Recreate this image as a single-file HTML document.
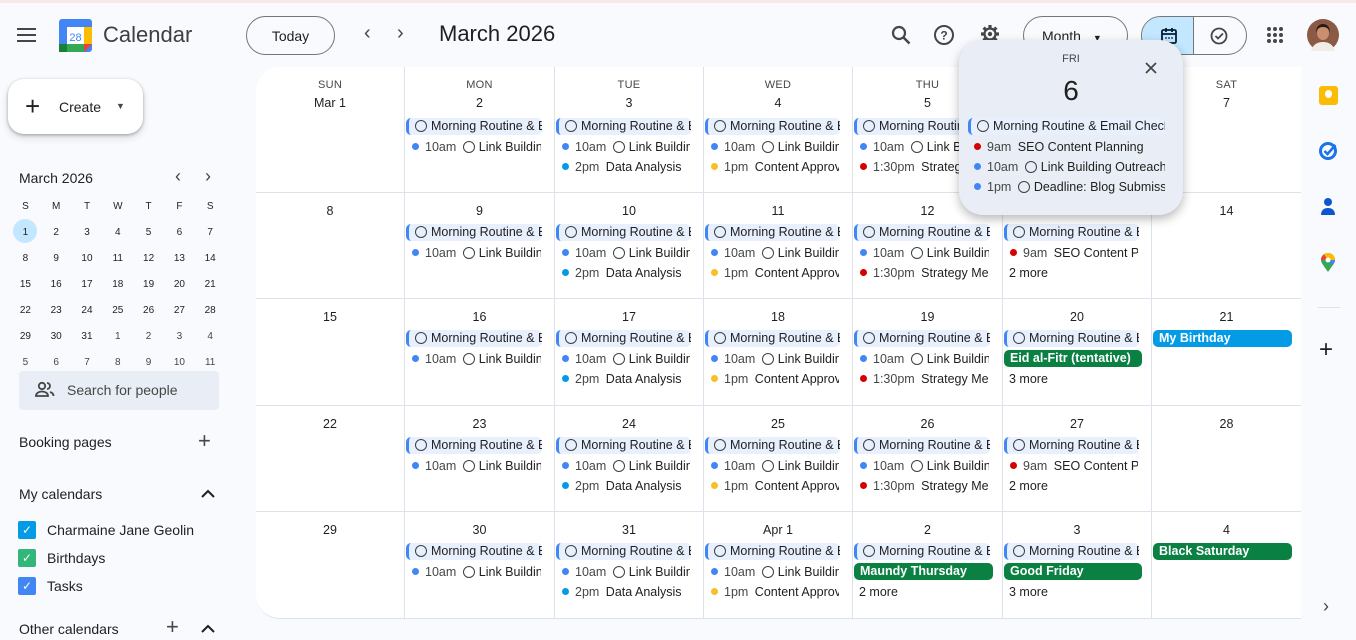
<!DOCTYPE html>
<html><head><meta charset="utf-8">
<style>
*{box-sizing:border-box;margin:0;padding:0}
body{width:1356px;height:633px;overflow:hidden;background:#f8fafd;font-family:"Liberation Sans",Arial,sans-serif;color:#1f1f1f;position:relative}
.a{position:absolute}
.topline{left:0;top:0;width:1356px;height:3px;background:#fbe9e7}
.grid{position:absolute;left:256px;top:67px;width:1045px;height:552px;background:#fff;border-radius:24px 0 0 24px;display:grid;grid-template-columns:149px 150px 149px 149px 150px 149px 149px;grid-template-rows:126px 106px 107px 106px 107px;overflow:hidden;border-bottom:1px solid #dde3ea}
.c{border-right:1px solid #dde3ea;border-bottom:1px solid #dde3ea;padding-top:9px;overflow:hidden;font-size:12px}
.c:nth-child(7n){border-right:none}
.dn{text-align:center;font-size:11px;color:#444746;height:18px;line-height:18px;letter-spacing:.3px}
.n{text-align:center;font-size:12.5px;height:18px;line-height:18px;color:#1f1f1f}
.ev{margin-top:4px}
.r1 .ev{margin-top:6px}
.ch{height:17px;margin:0 12px 3px 1px;background:#e8f0fe;border-left:3px solid #4285f4;border-radius:5px;white-space:nowrap;overflow:hidden;line-height:17px;padding-left:6px;font-size:12.5px}
.ch i,.l i.o{display:inline-block;width:12px;height:12px;border:1.6px solid #3c4043;border-radius:50%;vertical-align:-2px;margin-right:4px}
.l{height:20px;line-height:19px;white-space:nowrap;overflow:hidden;padding-left:7px;margin-right:13px;font-size:12.5px}
.l b{display:inline-block;width:7px;height:7px;border-radius:50%;background:#4285f4;margin-right:6px;vertical-align:1px}
.l span.t{color:#444746;margin-right:3px}
.g{height:17px;margin:0 9px 3px 1px;background:#0b8043;color:#fff;font-weight:bold;border-radius:5px;padding-left:6px;line-height:17px;white-space:nowrap;overflow:hidden;font-size:12.5px}
.more{padding-left:6px;height:20px;line-height:19px;font-size:12.5px}
.btn{border:1px solid #747775;border-radius:20px;font-size:14px;text-align:center;line-height:38px}
.pop{left:959px;top:40px;width:224px;height:175px;background:#e9eef6;border-radius:24px;box-shadow:0 4px 10px rgba(0,0,0,.28)}
</style></head><body>
<div class="a topline"></div>
<svg class="a" style="left:17px;top:26px" width="20" height="18"><g fill="#444746"><rect y="2" width="19" height="2"/><rect y="8" width="19" height="2"/><rect y="14" width="19" height="2"/></g></svg>
<svg class="a" style="left:59px;top:19px" width="33" height="33" viewBox="0 0 33 33"><rect x="0" y="0" width="33" height="33" rx="3" fill="#4285f4"/><rect x="25" y="8" width="8" height="17" fill="#fbbc04"/><rect x="0" y="25" width="25" height="8" rx="2" fill="#34a853"/><rect x="0" y="25" width="8" height="8" fill="#188038"/><path d="M25 25h8l-8 8z" fill="#ea4335"/><rect x="8" y="8" width="17" height="17" fill="#fff"/><text x="16.5" y="22" font-size="11" text-anchor="middle" fill="#4285f4" font-family="Liberation Sans">28</text></svg>
<div class="a" style="left:103px;top:22px;font-size:22px;color:#3c4043">Calendar</div>
<div class="a btn" style="left:246px;top:16px;width:89px;height:39px">Today</div>
<div class="a" style="left:364px;top:22px;font-size:20px;color:#444746">&#8249;</div>
<div class="a" style="left:397px;top:22px;font-size:20px;color:#444746">&#8250;</div>
<div class="a" style="left:439px;top:21px;font-size:22px">March 2026</div>
<svg class="a" style="left:891px;top:25px" width="20" height="20" viewBox="0 0 20 20"><circle cx="8" cy="8" r="6" fill="none" stroke="#444746" stroke-width="2.2"/><path d="M12.5 12.5l6 6" stroke="#444746" stroke-width="2.5"/></svg>
<svg class="a" style="left:933px;top:24px" width="22" height="22" viewBox="0 0 22 22"><circle cx="11" cy="11" r="9" fill="none" stroke="#444746" stroke-width="2"/><text x="11" y="15.5" font-size="12" text-anchor="middle" fill="#444746" font-weight="bold" font-family="Liberation Sans">?</text></svg>
<svg class="a" style="left:979px;top:23px" width="22" height="22" viewBox="0 0 22 22"><g stroke="#444746" stroke-width="3.2"><path d="M11 2v4M11 16v4M2 11h4M16 11h4M4.6 4.6l2.8 2.8M14.6 14.6l2.8 2.8M4.6 17.4l2.8-2.8M14.6 7.4l2.8-2.8"/></g><circle cx="11" cy="11" r="5.5" fill="none" stroke="#444746" stroke-width="2.2"/><circle cx="11" cy="11" r="2.2" fill="#444746"/></svg>
<div class="a btn" style="left:1023px;top:16px;width:105px;height:39px;text-align:left;padding-left:18px">Month <span style="font-size:9px;margin-left:8px">&#9660;</span></div>
<div class="a" style="left:1141px;top:16px;width:106px;height:39px;border:1px solid #747775;border-radius:20px;overflow:hidden"><div style="position:absolute;left:0;top:0;width:52px;height:39px;background:#c2e7ff;border-right:1px solid #747775"></div>
<svg style="position:absolute;left:18px;top:10px" width="18" height="18" viewBox="0 0 18 18"><rect x="2" y="3" width="14" height="13" rx="1.5" fill="none" stroke="#001d35" stroke-width="1.8"/><path d="M2 7h14M6 1v4M12 1v4" stroke="#001d35" stroke-width="1.8"/><circle cx="6" cy="11" r=".9" fill="#001d35"/><circle cx="9" cy="11" r=".9" fill="#001d35"/><circle cx="12" cy="11" r=".9" fill="#001d35"/></svg>
<svg style="position:absolute;left:67px;top:9px" width="20" height="20" viewBox="0 0 20 20"><circle cx="10" cy="10" r="7.5" fill="none" stroke="#444746" stroke-width="1.8"/><path d="M6.5 10l2.5 2.5 5-5" fill="none" stroke="#444746" stroke-width="1.8"/></svg></div>
<svg class="a" style="left:1266px;top:26px" width="18" height="18"><g fill="#444746"><circle cx="3" cy="3" r="2"/><circle cx="9" cy="3" r="2"/><circle cx="15" cy="3" r="2"/><circle cx="3" cy="9" r="2"/><circle cx="9" cy="9" r="2"/><circle cx="15" cy="9" r="2"/><circle cx="3" cy="15" r="2"/><circle cx="9" cy="15" r="2"/><circle cx="15" cy="15" r="2"/></g></svg>
<svg class="a" style="left:1307px;top:19px" width="32" height="32"><circle cx="16" cy="16" r="16" fill="#8a5a44"/><ellipse cx="16" cy="14" rx="6" ry="7" fill="#c98f6e"/><path d="M4 32c2-7 7-9 12-9s10 2 12 9z" fill="#f1ece6"/><path d="M9 14c0-7 4-9 7-9s7 2 7 9c-1-4-3-6-7-6s-6 2-7 6z" fill="#2b1a12"/></svg>
<div class="a" style="left:8px;top:79px;width:135px;height:55px;background:#fff;border-radius:16px;box-shadow:0 1px 3px rgba(0,0,0,.3),0 4px 8px rgba(0,0,0,.12)"></div>
<div class="a" style="left:25px;top:93px;font-size:26px;line-height:26px;font-weight:300">+</div>
<div class="a" style="left:59px;top:99px;font-size:14px">Create</div>
<div class="a" style="left:116px;top:101px;font-size:9px;color:#444746">&#9660;</div>
<div class="a" style="left:19px;top:170px;font-size:14px">March 2026</div>
<div class="a" style="left:175px;top:166px;font-size:18px;color:#444746">&#8249;</div>
<div class="a" style="left:205px;top:166px;font-size:18px;color:#444746">&#8250;</div>
<div class="a" style="left:13px;top:219px;width:24px;height:24px;border-radius:50%;background:#c2e7ff"></div>
<div class="a" style="left:10px;top:201px;display:grid;grid-template-columns:repeat(7,30.8px);grid-auto-rows:26px;font-size:10px;text-align:center;line-height:12px;color:#1f1f1f">
<div>S</div><div>M</div><div>T</div><div>W</div><div>T</div><div>F</div><div>S</div>
<div>1</div><div>2</div><div>3</div><div>4</div><div>5</div><div>6</div><div>7</div>
<div>8</div><div>9</div><div>10</div><div>11</div><div>12</div><div>13</div><div>14</div>
<div>15</div><div>16</div><div>17</div><div>18</div><div>19</div><div>20</div><div>21</div>
<div>22</div><div>23</div><div>24</div><div>25</div><div>26</div><div>27</div><div>28</div>
<div>29</div><div>30</div><div>31</div><div style="color:#444746">1</div><div style="color:#444746">2</div><div style="color:#444746">3</div><div style="color:#444746">4</div>
<div style="color:#444746">5</div><div style="color:#444746">6</div><div style="color:#444746">7</div><div style="color:#444746">8</div><div style="color:#444746">9</div><div style="color:#444746">10</div><div style="color:#444746">11</div>
</div>
<div class="a" style="left:19px;top:371px;width:200px;height:39px;background:#e9eef6;border-radius:4px"></div>
<svg class="a" style="left:35px;top:381px" width="20" height="18" viewBox="0 0 20 18"><circle cx="7" cy="5" r="3.2" fill="none" stroke="#444746" stroke-width="1.8"/><path d="M1 15c0-3 3-4.5 6-4.5s6 1.5 6 4.5z" fill="none" stroke="#444746" stroke-width="1.8"/><path d="M12 2a3 3 0 010 6M15 11c2 .6 3.5 2 3.5 4" fill="none" stroke="#444746" stroke-width="1.8"/></svg>
<div class="a" style="left:67px;top:382px;font-size:14px;color:#444746">Search for people</div>
<div class="a" style="left:19px;top:434px;font-size:14px">Booking pages</div>
<div class="a" style="left:198px;top:428px;font-size:22px;color:#444746;font-weight:300">+</div>
<div class="a" style="left:19px;top:486px;font-size:14px">My calendars</div>
<svg class="a" style="left:201px;top:489px" width="14" height="10"><path d="M1 8l6-6 6 6" fill="none" stroke="#1f1f1f" stroke-width="2"/></svg>
<div class="a" style="left:18px;top:521px;width:18px;height:18px;background:#039be5;border-radius:2px;color:#fff;font-size:12px;text-align:center;line-height:18px">&#10003;</div>
<div class="a" style="left:47px;top:522px;font-size:14px">Charmaine Jane Geolin</div>
<div class="a" style="left:18px;top:549px;width:18px;height:18px;background:#33b679;border-radius:2px;color:#fff;font-size:12px;text-align:center;line-height:18px">&#10003;</div>
<div class="a" style="left:47px;top:550px;font-size:14px">Birthdays</div>
<div class="a" style="left:18px;top:577px;width:18px;height:18px;background:#4285f4;border-radius:2px;color:#fff;font-size:12px;text-align:center;line-height:18px">&#10003;</div>
<div class="a" style="left:47px;top:578px;font-size:14px">Tasks</div>
<div class="a" style="left:19px;top:621px;font-size:14px">Other calendars</div>
<div class="a" style="left:166px;top:614px;font-size:22px;color:#444746;font-weight:300">+</div>
<svg class="a" style="left:201px;top:624px" width="14" height="10"><path d="M1 8l6-6 6 6" fill="none" stroke="#1f1f1f" stroke-width="2"/></svg>
<div class="a" style="left:1319px;top:86px;width:19px;height:19px;background:#fbbc04;border-radius:3px"></div>
<div class="a" style="left:1325px;top:90px;width:7px;height:8px;background:#fff;border-radius:50%"></div>
<svg class="a" style="left:1318px;top:140px" width="21" height="21" viewBox="0 0 21 21"><circle cx="10" cy="11" r="7.5" fill="none" stroke="#1a73e8" stroke-width="3"/><path d="M6.5 11l3 3 8-9" fill="none" stroke="#1a73e8" stroke-width="2.5"/></svg>
<svg class="a" style="left:1320px;top:197px" width="16" height="20"><circle cx="8" cy="5" r="4" fill="#0b57d0"/><path d="M1 18c0-5 3-7 7-7s7 2 7 7z" fill="#0b57d0"/></svg>
<svg class="a" style="left:1320px;top:253px" width="16" height="20" viewBox="0 0 16 20"><path d="M8 19C4 13 1 10 1 7a7 7 0 0114 0c0 3-3 6-7 12z" fill="#34a853"/><path d="M1 7a7 7 0 013-5.8L8 7z" fill="#ea4335"/><path d="M15 7c0 2-1 3.5-2.5 5.5L8 7z" fill="#4285f4"/><path d="M4 1.2A7 7 0 0115 7H8z" fill="#fbbc04"/><circle cx="8" cy="7" r="2.5" fill="#fff"/></svg>
<div class="a" style="left:1318px;top:307px;width:22px;height:1px;background:#dde3ea"></div>
<div class="a" style="left:1319px;top:336px;font-size:24px;font-weight:300">+</div>
<div class="a" style="left:1323px;top:596px;font-size:18px;color:#444746">&#8250;</div>
<div class="grid">
<div class="c r1"><div class="dn">SUN</div><div class="n">Mar 1</div></div>
<div class="c r1"><div class="dn">MON</div><div class="n">2</div><div class="ev"><div class="ch"><i></i>Morning Routine &amp; Email Check</div><div class="l"><b></b><span class="t">10am</span> <i class="o"></i>Link Building Outreach</div></div></div>
<div class="c r1"><div class="dn">TUE</div><div class="n">3</div><div class="ev"><div class="ch"><i></i>Morning Routine &amp; Email Check</div><div class="l"><b></b><span class="t">10am</span> <i class="o"></i>Link Building Outreach</div><div class="l"><b style="background:#039be5"></b><span class="t">2pm</span> Data Analysis</div></div></div>
<div class="c r1"><div class="dn">WED</div><div class="n">4</div><div class="ev"><div class="ch"><i></i>Morning Routine &amp; Email Check</div><div class="l"><b></b><span class="t">10am</span> <i class="o"></i>Link Building Outreach</div><div class="l"><b style="background:#f6bf26"></b><span class="t">1pm</span> Content Approval</div></div></div>
<div class="c r1"><div class="dn">THU</div><div class="n">5</div><div class="ev"><div class="ch"><i></i>Morning Routine &amp; Email Check</div><div class="l"><b></b><span class="t">10am</span> <i class="o"></i>Link Building Outreach</div><div class="l"><b style="background:#d50000"></b><span class="t">1:30pm</span> Strategy Meeting</div></div></div>
<div class="c r1"><div class="dn">FRI</div><div class="n">6</div></div>
<div class="c r1"><div class="dn">SAT</div><div class="n">7</div></div>

<div class="c"><div class="n">8</div></div>
<div class="c"><div class="n">9</div><div class="ev"><div class="ch"><i></i>Morning Routine &amp; Email Check</div><div class="l"><b></b><span class="t">10am</span> <i class="o"></i>Link Building Outreach</div></div></div>
<div class="c"><div class="n">10</div><div class="ev"><div class="ch"><i></i>Morning Routine &amp; Email Check</div><div class="l"><b></b><span class="t">10am</span> <i class="o"></i>Link Building Outreach</div><div class="l"><b style="background:#039be5"></b><span class="t">2pm</span> Data Analysis</div></div></div>
<div class="c"><div class="n">11</div><div class="ev"><div class="ch"><i></i>Morning Routine &amp; Email Check</div><div class="l"><b></b><span class="t">10am</span> <i class="o"></i>Link Building Outreach</div><div class="l"><b style="background:#f6bf26"></b><span class="t">1pm</span> Content Approval</div></div></div>
<div class="c"><div class="n">12</div><div class="ev"><div class="ch"><i></i>Morning Routine &amp; Email Check</div><div class="l"><b></b><span class="t">10am</span> <i class="o"></i>Link Building Outreach</div><div class="l"><b style="background:#d50000"></b><span class="t">1:30pm</span> Strategy Meeting</div></div></div>
<div class="c"><div class="n">13</div><div class="ev"><div class="ch"><i></i>Morning Routine &amp; Email Check</div><div class="l"><b style="background:#d50000"></b><span class="t">9am</span> SEO Content Planning</div><div class="more">2 more</div></div></div>
<div class="c"><div class="n">14</div></div>

<div class="c"><div class="n">15</div></div>
<div class="c"><div class="n">16</div><div class="ev"><div class="ch"><i></i>Morning Routine &amp; Email Check</div><div class="l"><b></b><span class="t">10am</span> <i class="o"></i>Link Building Outreach</div></div></div>
<div class="c"><div class="n">17</div><div class="ev"><div class="ch"><i></i>Morning Routine &amp; Email Check</div><div class="l"><b></b><span class="t">10am</span> <i class="o"></i>Link Building Outreach</div><div class="l"><b style="background:#039be5"></b><span class="t">2pm</span> Data Analysis</div></div></div>
<div class="c"><div class="n">18</div><div class="ev"><div class="ch"><i></i>Morning Routine &amp; Email Check</div><div class="l"><b></b><span class="t">10am</span> <i class="o"></i>Link Building Outreach</div><div class="l"><b style="background:#f6bf26"></b><span class="t">1pm</span> Content Approval</div></div></div>
<div class="c"><div class="n">19</div><div class="ev"><div class="ch"><i></i>Morning Routine &amp; Email Check</div><div class="l"><b></b><span class="t">10am</span> <i class="o"></i>Link Building Outreach</div><div class="l"><b style="background:#d50000"></b><span class="t">1:30pm</span> Strategy Meeting</div></div></div>
<div class="c"><div class="n">20</div><div class="ev"><div class="ch"><i></i>Morning Routine &amp; Email Check</div><div class="g">Eid al-Fitr (tentative)</div><div class="more">3 more</div></div></div>
<div class="c"><div class="n">21</div><div class="ev"><div class="g" style="background:#039be5">My Birthday</div></div></div>

<div class="c"><div class="n">22</div></div>
<div class="c"><div class="n">23</div><div class="ev"><div class="ch"><i></i>Morning Routine &amp; Email Check</div><div class="l"><b></b><span class="t">10am</span> <i class="o"></i>Link Building Outreach</div></div></div>
<div class="c"><div class="n">24</div><div class="ev"><div class="ch"><i></i>Morning Routine &amp; Email Check</div><div class="l"><b></b><span class="t">10am</span> <i class="o"></i>Link Building Outreach</div><div class="l"><b style="background:#039be5"></b><span class="t">2pm</span> Data Analysis</div></div></div>
<div class="c"><div class="n">25</div><div class="ev"><div class="ch"><i></i>Morning Routine &amp; Email Check</div><div class="l"><b></b><span class="t">10am</span> <i class="o"></i>Link Building Outreach</div><div class="l"><b style="background:#f6bf26"></b><span class="t">1pm</span> Content Approval</div></div></div>
<div class="c"><div class="n">26</div><div class="ev"><div class="ch"><i></i>Morning Routine &amp; Email Check</div><div class="l"><b></b><span class="t">10am</span> <i class="o"></i>Link Building Outreach</div><div class="l"><b style="background:#d50000"></b><span class="t">1:30pm</span> Strategy Meeting</div></div></div>
<div class="c"><div class="n">27</div><div class="ev"><div class="ch"><i></i>Morning Routine &amp; Email Check</div><div class="l"><b style="background:#d50000"></b><span class="t">9am</span> SEO Content Planning</div><div class="more">2 more</div></div></div>
<div class="c"><div class="n">28</div></div>

<div class="c"><div class="n">29</div></div>
<div class="c"><div class="n">30</div><div class="ev"><div class="ch"><i></i>Morning Routine &amp; Email Check</div><div class="l"><b></b><span class="t">10am</span> <i class="o"></i>Link Building Outreach</div></div></div>
<div class="c"><div class="n">31</div><div class="ev"><div class="ch"><i></i>Morning Routine &amp; Email Check</div><div class="l"><b></b><span class="t">10am</span> <i class="o"></i>Link Building Outreach</div><div class="l"><b style="background:#039be5"></b><span class="t">2pm</span> Data Analysis</div></div></div>
<div class="c"><div class="n">Apr 1</div><div class="ev"><div class="ch"><i></i>Morning Routine &amp; Email Check</div><div class="l"><b></b><span class="t">10am</span> <i class="o"></i>Link Building Outreach</div><div class="l"><b style="background:#f6bf26"></b><span class="t">1pm</span> Content Approval</div></div></div>
<div class="c"><div class="n">2</div><div class="ev"><div class="ch"><i></i>Morning Routine &amp; Email Check</div><div class="g">Maundy Thursday</div><div class="more">2 more</div></div></div>
<div class="c"><div class="n">3</div><div class="ev"><div class="ch"><i></i>Morning Routine &amp; Email Check</div><div class="g">Good Friday</div><div class="more">3 more</div></div></div>
<div class="c"><div class="n">4</div><div class="ev"><div class="g">Black Saturday</div></div></div>
</div>
<div class="a pop">
<div class="a" style="left:0;top:13px;width:224px;text-align:center;font-size:11px;color:#444746">FRI</div>
<div class="a" style="left:0;top:35px;width:224px;text-align:center;font-size:28px;color:#1f1f1f">6</div>
<svg class="a" style="left:186px;top:22px" width="12" height="12"><path d="M1 1l10 10M11 1L1 11" stroke="#444746" stroke-width="1.8"/></svg>
<div class="a" style="left:8px;top:78px;width:198px;overflow:hidden">
<div class="ch" style="margin-right:0"><i></i>Morning Routine &amp; Email Check</div>
<div class="l" style="margin-right:0"><b style="background:#d50000"></b><span class="t">9am</span> SEO Content Planning</div>
<div class="l" style="margin-right:0"><b></b><span class="t">10am</span> <i class="o"></i>Link Building Outreach</div>
<div class="l" style="margin-right:0"><b></b><span class="t">1pm</span> <i class="o"></i>Deadline: Blog Submission</div>
</div>
</div>
</body></html>
